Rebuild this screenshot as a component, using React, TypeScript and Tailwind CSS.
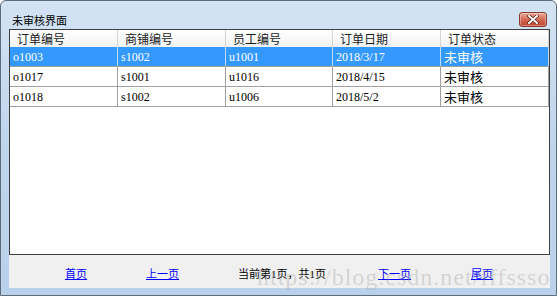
import React from "react";

const columns = ["订单编号", "商铺编号", "员工编号", "订单日期", "订单状态"];

const rows = [
	["o1003", "s1002", "u1001", "2018/3/17", "未审核"],
	["o1017", "s1001", "u1016", "2018/4/15", "未审核"],
	["o1018", "s1002", "u1006", "2018/5/2", "未审核"],
];

const colWidths = ["w-[108px]", "w-[108px]", "w-[107px]", "w-[108px]", "w-[108px]"];

const CloseButton = () => (
	<div className="flex h-[15px] w-[28px] items-center justify-center rounded-[3px] border border-[#8a3b2e] bg-gradient-to-b from-[#e9a99b] via-[#d26a55] to-[#c0432c] shadow-[inset_0_0_0_1px_rgba(255,255,255,0.35)]">
		<svg width="12" height="9" viewBox="0 0 12 9">
			<path
				d="M2 1 L10 8 M10 1 L2 8"
				stroke="#5a1a10"
				strokeWidth="3.4"
				strokeLinecap="square"
			/>
			<path
				d="M2 1 L10 8 M10 1 L2 8"
				stroke="#ffffff"
				strokeWidth="2"
				strokeLinecap="square"
			/>
		</svg>
	</div>
);

const App = () => {
	return (
		<div className="relative h-[299px] w-[558px] overflow-hidden bg-white font-['Liberation_Serif','Noto_Sans_CJK_SC',serif] text-[12px] text-black">
			<div className="flex h-[296px] w-[557px] flex-col rounded-t-[6px] border border-[#5d6b7a] bg-gradient-to-b from-[#d3e3f4] via-[#bed5ec] to-[#b9d1ea] pl-[8px] pr-[6px]">
				{/* title bar */}
				<div className="flex h-[28px] shrink-0 items-center justify-between pt-[9px]">
					<span className="ml-[3px] font-['Noto_Sans_CJK_SC',sans-serif] text-[11px] leading-[16px] text-black">
						未审核界面
					</span>
					<div className="mr-[3px]">
						<CloseButton />
					</div>
				</div>

				{/* data grid */}
				<div className="flex h-[226px] shrink-0 flex-col border border-[#3f3f3f] bg-white">
					<div className="flex h-[17px] shrink-0 bg-gradient-to-b from-white to-[#f1f2f4]">
						{columns.map((c, i) => (
							<div
								key={c}
								className={`${colWidths[i]} flex items-center border-r border-[#d5d5d5] pl-[7px] font-['Noto_Sans_CJK_SC',sans-serif] text-[12px] leading-[16px] text-[#1a1a1a]`}
							>
								{c}
							</div>
						))}
					</div>
					{rows.map((r, ri) => {
						const selected = ri === 0;
						return (
							<div
								key={r[0]}
								className={`flex h-[20px] shrink-0 border-b border-[#a0a0a0] ${selected ? "bg-[#3399ff] text-white" : "bg-white text-black"}`}
							>
								{r.map((v, ci) => (
									<div
										key={ci}
										className={`${colWidths[ci]} flex items-center border-r pl-[3px] ${selected ? "border-[#c3dcf5]" : "border-[#a0a0a0]"} ${ci === 4 ? "font-['Noto_Sans_CJK_SC',sans-serif] text-[13px]" : "text-[12px]"}`}
									>
										{v}
									</div>
								))}
							</div>
						);
					})}
				</div>

				{/* pager */}
				<div className="flex h-[33px] shrink-0 items-center bg-[#f0f0f0] pt-[6px] font-['Liberation_Serif','Noto_Sans_CJK_SC',sans-serif] text-[11px]">
					<div className="w-[56px]" />
					<a className="w-[81px] text-[#0000ff] underline">首页</a>
					<a className="w-[92px] text-[#0000ff] underline">上一页</a>
					<span className="w-[140px] text-black">当前第1页，共1页</span>
					<a className="w-[93px] text-[#0000ff] underline">下一页</a>
					<a className="text-[#0000ff] underline">尾页</a>
				</div>
			</div>

			{/* watermark */}
			<div className="pointer-events-none absolute left-[257px] top-[265px] font-['Liberation_Serif',serif] text-[24px] leading-[24px] tracking-[1px] text-[rgba(150,150,150,0.32)]">
				https://blog.csdn.net/fffssso
			</div>
		</div>
	);
};

export default App;
